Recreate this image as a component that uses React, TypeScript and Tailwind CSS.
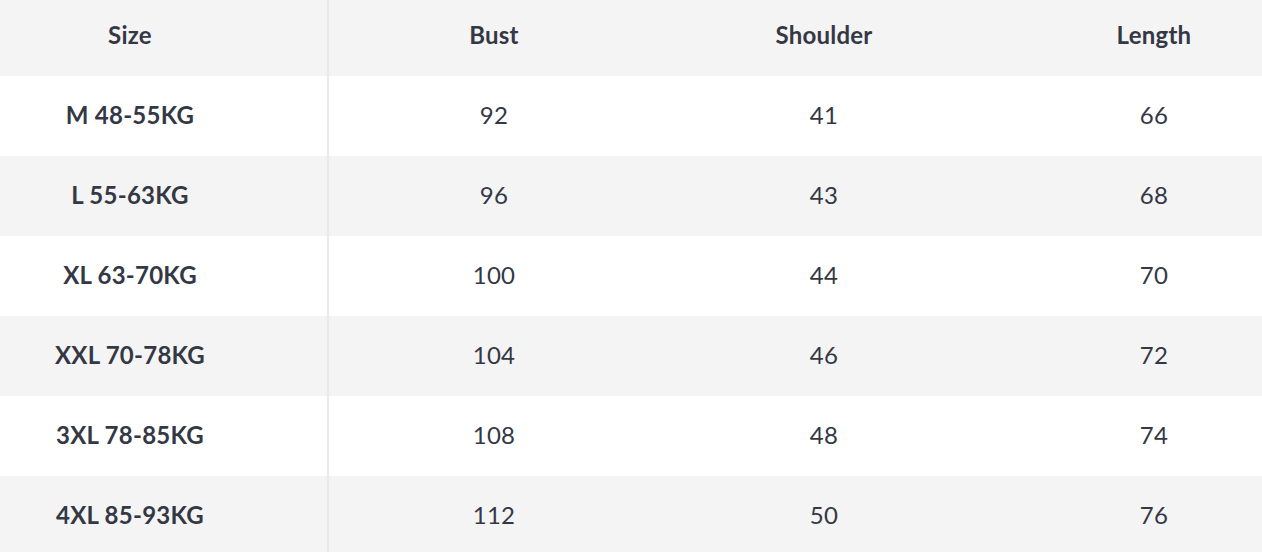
const ROWS = [
  { size: "M 48-55KG", bust: "92", shoulder: "41", length: "66" },
  { size: "L 55-63KG", bust: "96", shoulder: "43", length: "68" },
  { size: "XL 63-70KG", bust: "100", shoulder: "44", length: "70" },
  { size: "XXL 70-78KG", bust: "104", shoulder: "46", length: "72" },
  { size: "3XL 78-85KG", bust: "108", shoulder: "48", length: "74" },
  { size: "4XL 85-93KG", bust: "112", shoulder: "50", length: "76" },
];

export default function App() {
  return (
    <div className="w-[1262px] h-[552px] overflow-hidden bg-white font-['Lato','Liberation_Sans',sans-serif] text-[24px] tracking-[0.01em] text-[#343845]">
      <div className="w-[1319px]">
        {/* header */}
        <div className="grid grid-cols-[329px_330px_330px_330px] h-[76px] bg-[#f4f4f4] font-bold">
          <div className="flex items-center border-r-2 border-[#e9e9e9] pb-[6px]">
            <span className="w-[260px] text-center">Size</span>
          </div>
          <div className="flex items-center justify-center pb-[6px]">Bust</div>
          <div className="flex items-center justify-center pb-[6px]">Shoulder</div>
          <div className="flex items-center justify-center pb-[6px]">Length</div>
        </div>

        {ROWS.map((r, i) => (
          <div
            key={r.size}
            className={`grid grid-cols-[329px_330px_330px_330px] h-[80px] ${i % 2 === 0 ? "bg-white" : "bg-[#f4f4f4]"}`}
          >
            <div className="flex items-center border-r-2 border-[#e9e9e9] pb-[2px]">
              <span className="w-[260px] text-center font-bold">{r.size}</span>
            </div>
            <div className="flex items-center justify-center pb-[2px]">{r.bust}</div>
            <div className="flex items-center justify-center pb-[2px]">{r.shoulder}</div>
            <div className="flex items-center justify-center pb-[2px]">{r.length}</div>
          </div>
        ))}
      </div>
    </div>
  );
}
